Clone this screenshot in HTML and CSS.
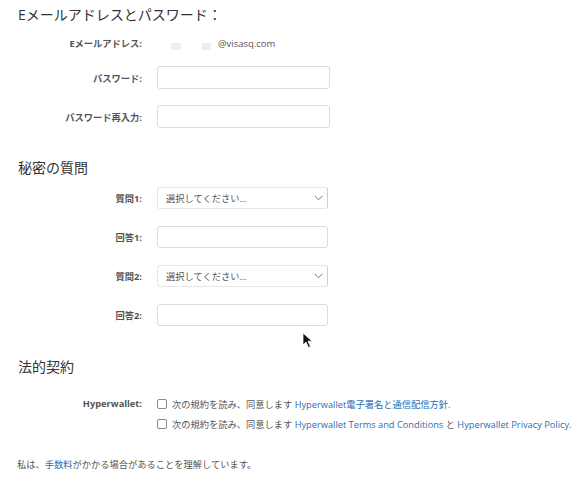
FILE: index.html
```html
<!DOCTYPE html>
<html lang="ja">
<head>
<meta charset="utf-8">
<title>Hyperwallet</title>
<link rel="stylesheet" href="styles.css">
</head>
<body>
<div class="page">
  <h2 class="heading first">Eメールアドレスとパスワード：</h2>
  <div class="row email-row">
    <div class="label">Eメールアドレス:</div>
    <div class="value"><span class="redact r1"></span><span class="redact r2"></span><span class="mail">@visasq.com</span></div>
  </div>
  <div class="row gap-a">
    <div class="label">パスワード:</div>
    <div class="field wide"></div>
  </div>
  <div class="row gap-b">
    <div class="label">パスワード再入力:</div>
    <div class="field wide"></div>
  </div>

  <h2 class="heading second">秘密の質問</h2>
  <div class="row tight gap-c">
    <div class="label">質問1:</div>
    <div class="select"><span>選択してください...</span>
      <svg class="chev" width="9" height="6" viewBox="0 0 9 6"><path d="M0.5 0.8 L4.5 4.8 L8.5 0.8" fill="none" stroke="#777" stroke-width="1"/></svg>
    </div>
  </div>
  <div class="row tight gap-d">
    <div class="label">回答1:</div>
    <div class="field narrow"></div>
  </div>
  <div class="row tight gap-d">
    <div class="label">質問2:</div>
    <div class="select"><span>選択してください...</span>
      <svg class="chev" width="9" height="6" viewBox="0 0 9 6"><path d="M0.5 0.8 L4.5 4.8 L8.5 0.8" fill="none" stroke="#777" stroke-width="1"/></svg>
    </div>
  </div>
  <div class="row tight gap-d">
    <div class="label">回答2:</div>
    <div class="field narrow"></div>
  </div>

  <h2 class="heading third">法的契約</h2>
  <div class="legal">
    <div class="label">Hyperwallet:</div>
    <div class="checks">
      <div class="check"><span class="box"></span><span>次の規約を読み、同意します <a href="#">Hyperwallet電子署名と通信配信方針.</a></span></div>
      <div class="check"><span class="box"></span><span>次の規約を読み、同意します <a href="#">Hyperwallet Terms and Conditions</a> と <a href="#">Hyperwallet Privacy Policy.</a></span></div>
    </div>
  </div>

  <p class="note">私は、<a href="#">手数料</a>がかかる場合があることを理解しています。</p>

  <svg class="cursor" width="12" height="17" viewBox="0 0 12 17"><path d="M1 1 L1 13 L4 10 L6.5 15.5 L8.5 14.6 L6 9.2 L10.2 9.2 Z" fill="#111" stroke="#fff" stroke-width="0.8"/></svg>
</div>
</body>
</html>
```

FILE: styles.css
```css
html, body {
  margin: 0;
  padding: 0;
  background: #fff;
}
body {
  font-family: "Open Sans", "Noto Sans CJK JP", sans-serif;
  color: #444;
  font-size: 9.25px;
}
.page {
  position: relative;
  width: 587px;
  height: 487px;
  padding-top: 5px;
  box-sizing: border-box;
}
.heading {
  margin: 0 0 0 18px;
  font-size: 14px;
  font-weight: normal;
  line-height: 20px;
  color: #333;
}
.heading.second { margin-top: 30px; }
.heading.third { margin-top: 31px; }

.row {
  display: grid;
  grid-template-columns: 142px 173px;
  column-gap: 15px;
  align-items: center;
  height: 23px;
}
.row.tight {
  grid-template-columns: 142px 171px;
  height: 22px;
}
.email-row {
  height: 16px;
  margin-top: 10px;
}
.gap-a { margin-top: 15px; }
.gap-b { margin-top: 16px; }
.gap-c { margin-top: 9px; }
.gap-d { margin-top: 17px; }

.label {
  text-align: right;
  font-weight: bold;
  font-size: 9.25px;
  color: #555;
  white-space: nowrap;
}
.value {
  display: flex;
  align-items: center;
  color: #555;
}
.redact {
  display: block;
  height: 7px;
  background: #eeeeee;
  margin-top: 6px;
}
.r1 { width: 10px; margin-left: 14px; }
.r2 { width: 9px; margin-left: 21px; }
.mail { margin-left: 7px; font-size: 9.5px; }

.field {
  height: 100%;
  box-sizing: border-box;
  border: 1px solid #dcdcdc;
  border-radius: 3px;
  background: #fff;
}
.select {
  height: 100%;
  box-sizing: border-box;
  border: 1px solid #e6e6e6;
  border-right-color: #cfcfcf;
  border-radius: 3px;
  display: flex;
  align-items: center;
  justify-content: space-between;
  padding: 0 4px 0 8px;
  color: #555;
}
.chev { display: block; }

.legal {
  display: grid;
  grid-template-columns: 142px auto;
  column-gap: 15px;
  margin-top: 17px;
}
.legal .label {
  line-height: 20px;
}
.checks {
  display: flex;
  flex-direction: column;
}
.check {
  display: flex;
  align-items: center;
  height: 20px;
  white-space: nowrap;
  color: #555;
}
.box {
  width: 10px;
  height: 10px;
  box-sizing: border-box;
  border: 1px solid #8a8a8a;
  border-radius: 2px;
  margin-right: 5px;
  flex: none;
}
a {
  color: #1f6fb5;
  text-decoration: none;
}
.note {
  margin: 21px 0 0 17px;
  line-height: 20px;
  color: #555;
}
.cursor {
  position: absolute;
  left: 302px;
  top: 332px;
}
```
